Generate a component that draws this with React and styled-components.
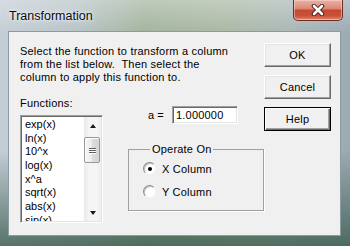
import React from "react";
import styled, { createGlobalStyle } from "styled-components";

const GlobalStyle = createGlobalStyle`
  html, body {
    margin: 0;
    padding: 0;
    background: #8fa39a;
  }
  body {
    font-family: "Liberation Sans", Arial, sans-serif;
  }
`;

const Window = styled.div`
  width: 350px;
  height: 246px;
  display: flex;
  flex-direction: column;
  overflow: hidden;
  box-sizing: border-box;
  background:
    linear-gradient(to bottom, rgba(255, 255, 255, 0.3), rgba(255, 255, 255, 0) 34px),
    linear-gradient(to bottom, rgba(60, 90, 70, 0) 150px, rgba(50, 85, 70, 0.75) 246px),
    linear-gradient(to right, #c4ced6 0%, #b7c3c6 22%, #a2b39d 42%, #a9b8a1 62%, #aab7b4 82%, #9caab3 100%);
`;

const TitleBar = styled.div`
  height: 31px;
  flex-shrink: 0;
  display: flex;
  align-items: flex-start;
  padding-left: 9px;
`;

const Title = styled.span`
  margin-top: 8px;
  font-family: "Liberation Sans", Arial, sans-serif;
  font-size: 12.5px;
  line-height: 16px;
  color: #0b0b14;
  text-shadow: 0 0 6px rgba(255, 255, 255, 0.9), 0 0 3px rgba(255, 255, 255, 0.8);
`;

const CloseButton = styled.div`
  margin-left: auto;
  margin-right: 7px;
  width: 50px;
  height: 21px;
  box-sizing: border-box;
  border: 1px solid #6b2f27;
  border-top: none;
  border-radius: 0 0 5px 5px;
  display: flex;
  align-items: center;
  justify-content: center;
  background: linear-gradient(to bottom, #e9b2a6 0%, #dc8a76 42%, #c8472f 52%, #c9533a 80%, #de8f6c 100%);
  box-shadow: inset 0 0 0 1px rgba(255, 220, 210, 0.5);
`;

const Client = styled.div`
  flex: 1;
  margin: 0 9px 10px 8px;
  border: 1px solid #8d9aa3;
  background: #f0f0f0;
  display: flex;
  font-family: "Liberation Sans", Arial, sans-serif;
  font-size: 11px;
  color: #000;
`;

const LeftCol = styled.div`
  flex: 1;
  padding: 13px 0 0 11px;
  display: flex;
  flex-direction: column;
`;

const Description = styled.p`
  margin: 0;
  line-height: 13px;
  letter-spacing: 0.2px;
  white-space: pre;
`;

const Lower = styled.div`
  margin-top: 13px;
  display: flex;
`;

const FunctionsCol = styled.div`
  display: flex;
  flex-direction: column;
`;

const Label = styled.span`
  line-height: 13px;
  letter-spacing: 0.2px;
`;

const ListBox = styled.div`
  margin-top: 5px;
  width: 83px;
  height: 108px;
  box-sizing: border-box;
  border: 1px solid;
  border-color: #a0a0a0 #ffffff #ffffff #a0a0a0;
  padding: 1px;
  box-shadow: inset 1px 1px #696969, inset -1px -1px #e3e3e3;
  display: flex;
`;

const Items = styled.div`
  flex: 1;
  background: #fff;
  overflow: hidden;
  padding: 1px 0 0 3px;
`;

const Item = styled.div`
  line-height: 13.67px;
  white-space: nowrap;
`;

const ScrollBar = styled.div`
  width: 17px;
  display: flex;
  flex-direction: column;
  background: linear-gradient(to right, #e9e9e9, #f5f5f5 30%, #f5f5f5 70%, #eeeeee);
`;

const ArrowBox = styled.div`
  height: 17px;
  display: flex;
  align-items: center;
  justify-content: center;
`;

const Arrow = styled.span`
  width: 0;
  height: 0;
  border-left: 3.5px solid transparent;
  border-right: 3.5px solid transparent;
  ${(p) =>
    p.$dir === "up"
      ? "border-bottom: 4px solid #1a1a1a;"
      : "border-top: 4px solid #1a1a1a;"}
`;

const Track = styled.div`
  flex: 1;
  padding-top: 3px;
`;

const Thumb = styled.div`
  width: 16px;
  height: 26px;
  box-sizing: border-box;
  border: 1px solid #989898;
  border-radius: 2px;
  background: linear-gradient(to right, #f6f6f6 0%, #ececec 50%, #dcdcdc 51%, #d4d4d4 100%);
  box-shadow: inset 1px 1px #ffffff;
  display: flex;
  flex-direction: column;
  align-items: center;
  justify-content: center;
  gap: 1px;
`;

const Grip = styled.span`
  width: 7px;
  height: 1px;
  background: #5e5e5e;
  box-shadow: 0 1px #ffffff;
`;

const ParamsCol = styled.div`
  margin-left: 25px;
  width: 136px;
  padding-top: 9px;
  display: flex;
  flex-direction: column;
`;

const ParamRow = styled.div`
  display: flex;
  align-items: center;
  height: 18px;
  padding-left: 20px;
`;

const ParamLabel = styled.span`
  width: 24px;
`;

const TextBox = styled.div`
  width: 66px;
  height: 18px;
  box-sizing: border-box;
  border: 1px solid;
  border-color: #a0a0a0 #ffffff #ffffff #a0a0a0;
  box-shadow: inset 1px 1px #696969, inset -1px -1px #e3e3e3;
  background: #fff;
  padding-left: 3px;
  line-height: 16px;
  letter-spacing: 0.2px;
`;

const Group = styled.fieldset`
  margin: 19px 0 0 0;
  padding: 2px 0 7px 14px;
  border: 1px solid #a0a0a0;
  box-shadow: 1px 1px 0 #ffffff;
  min-width: 0;
`;

const Legend = styled.legend`
  margin-left: 7px;
  padding: 0 2px;
  line-height: 12px;
  letter-spacing: 0.2px;
`;

const RadioRow = styled.div`
  height: 23px;
  display: flex;
  align-items: center;
  gap: 6px;
  letter-spacing: 0.2px;
`;

const RadioCircle = styled.span`
  width: 13px;
  height: 13px;
  box-sizing: border-box;
  border-radius: 50%;
  border: 1px solid;
  border-color: #8c8c8c #f4f4f4 #f4f4f4 #8c8c8c;
  box-shadow: inset 1px 1px #bdbdbd;
  background: #ffffff;
  display: flex;
  align-items: center;
  justify-content: center;

  &::after {
    content: "";
    width: 4px;
    height: 4px;
    border-radius: 50%;
    background: ${(p) => (p.$checked ? "#000" : "transparent")};
  }
`;

const ButtonCol = styled.div`
  width: 80px;
  margin: 11px 9px 0 0;
  display: flex;
  flex-direction: column;
  gap: 8px;
`;

const Button = styled.div`
  height: 24px;
  box-sizing: border-box;
  background: #f0f0f0;
  display: flex;
  align-items: center;
  justify-content: center;
  letter-spacing: 0.2px;
  border: 1px solid;
  border-color: ${(p) => (p.$default ? "#000" : "#ffffff #696969 #696969 #ffffff")};
  box-shadow: ${(p) =>
    p.$default
      ? "inset 1px 1px #ffffff, inset -1px -1px #696969, inset -2px -2px #a0a0a0"
      : "inset -1px -1px #a0a0a0, inset 1px 1px #e3e3e3"};
`;

const functions = ["exp(x)", "ln(x)", "10^x", "log(x)", "x^a", "sqrt(x)", "abs(x)", "sin(x)"];

const App = () => {
  return (
    <>
      <GlobalStyle />
      <Window>
        <TitleBar>
          <Title>Transformation</Title>
          <CloseButton>
            <svg width="14" height="12" viewBox="0 0 14 12">
              <path d="M3 2 L11 10 M11 2 L3 10" stroke="#3a1a16" strokeWidth="4.5" strokeLinecap="round" />
              <path d="M3 2 L11 10 M11 2 L3 10" stroke="#ffffff" strokeWidth="2.6" strokeLinecap="round" />
            </svg>
          </CloseButton>
        </TitleBar>
        <Client>
          <LeftCol>
            <Description>
              {"Select the function to transform a column\nfrom the list below.  Then select the\ncolumn to apply this function to."}
            </Description>
            <Lower>
              <FunctionsCol>
                <Label>Functions:</Label>
                <ListBox>
                  <Items>
                    {functions.map((f) => (
                      <Item key={f}>{f}</Item>
                    ))}
                  </Items>
                  <ScrollBar>
                    <ArrowBox>
                      <Arrow $dir="up" />
                    </ArrowBox>
                    <Track>
                      <Thumb>
                        <Grip />
                        <Grip />
                        <Grip />
                      </Thumb>
                    </Track>
                    <ArrowBox>
                      <Arrow $dir="down" />
                    </ArrowBox>
                  </ScrollBar>
                </ListBox>
              </FunctionsCol>
              <ParamsCol>
                <ParamRow>
                  <ParamLabel>a =</ParamLabel>
                  <TextBox>1.000000</TextBox>
                </ParamRow>
                <Group>
                  <Legend>Operate On</Legend>
                  <RadioRow>
                    <RadioCircle $checked />
                    X Column
                  </RadioRow>
                  <RadioRow>
                    <RadioCircle />
                    Y Column
                  </RadioRow>
                </Group>
              </ParamsCol>
            </Lower>
          </LeftCol>
          <ButtonCol>
            <Button>OK</Button>
            <Button>Cancel</Button>
            <Button $default>Help</Button>
          </ButtonCol>
        </Client>
      </Window>
    </>
  );
};

export default App;
